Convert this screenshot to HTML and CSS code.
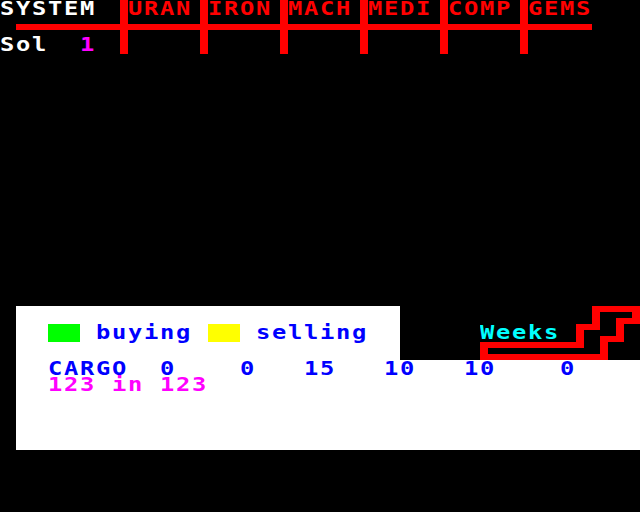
FILE: index.html
```html
<!DOCTYPE html>
<html>
<head>
<meta charset="utf-8">
<title>Trade</title>
<link rel="stylesheet" href="styles.css">
</head>
<body>
<div class="screen">
  <div class="table">
    <div class="sys"><span class="t white">SYSTEM</span></div>
    <div class="rule"></div>
    <div class="sol"><span class="t white">Sol</span><span class="t magenta">1</span></div>
    <div class="col c2"><span class="t red">URAN</span></div>
    <div class="col c3"><span class="t red">IRON</span></div>
    <div class="col c4"><span class="t red">MACH</span></div>
    <div class="col c5"><span class="t red">MEDI</span></div>
    <div class="col c6"><span class="t red">COMP</span></div>
    <div class="col c7"><span class="t red">GEMS</span></div>
  </div>

  <div class="panel">
    <div class="legend">
      <div class="swatch green"></div>
      <span class="t blue">buying</span>
      <div class="swatch yellow"></div>
      <span class="t blue">selling</span>
    </div>
    <div class="weeks">
      <div class="weeks-label"><span class="t cyan">Weeks</span></div>
      <svg class="stairs" width="240" height="54" viewBox="0 0 240 54">
        <g fill="#ff0000">
          <rect x="192" y="0" width="48" height="6"/>
          <rect x="232" y="0" width="8" height="12"/>
          <rect x="216" y="12" width="24" height="6"/>
          <rect x="216" y="12" width="8" height="24"/>
          <rect x="200" y="30" width="24" height="6"/>
          <rect x="200" y="30" width="8" height="24"/>
          <rect x="80" y="48" width="128" height="6"/>
          <rect x="192" y="0" width="8" height="24"/>
          <rect x="176" y="18" width="24" height="6"/>
          <rect x="176" y="18" width="8" height="24"/>
          <rect x="80" y="36" width="104" height="6"/>
          <rect x="80" y="36" width="8" height="18"/>
        </g>
      </svg>
    </div>
    <div class="cargo">
      <span class="t blue">CARGO</span>
      <span class="t blue">0</span>
      <span class="t blue">0</span>
      <span class="t blue">15</span>
      <span class="t blue">10</span>
      <span class="t blue">10</span>
      <span class="t blue">0</span>
      <div class="cap"><span class="t magenta">123 in 123</span></div>
    </div>
  </div>
</div>
</body>
</html>
```

FILE: styles.css
```css
html, body {
  margin: 0;
  padding: 0;
  background: #000;
}

.screen {
  width: 640px;
  height: 512px;
  overflow: hidden;
  background: #000;
}

.t {
  display: inline-block;
  font-family: "DejaVu Sans Mono", "Liberation Mono", monospace;
  font-weight: bold;
  font-size: 19px;
  line-height: 16px;
  letter-spacing: 1.36px;
  white-space: pre;
  transform: scaleX(1.25);
  transform-origin: 0 0;
}

.white { color: #ffffff; }
.red { color: #ff0000; }
.magenta { color: #ff00ff; }
.blue { color: #0000ff; }
.cyan { color: #00ffff; }

/* top table */
.table {
  display: grid;
  grid-template-columns: 120px repeat(6, 80px);
  grid-template-rows: 24px 6px 24px;
  width: 600px;
}

.sys {
  grid-column: 1;
  grid-row: 1;
}

.rule {
  grid-column: 1 / -1;
  grid-row: 2;
  margin: 0 8px 0 16px;
  background: #ff0000;
}

.sol {
  grid-column: 1;
  grid-row: 3;
  padding-top: 6px;
  display: grid;
  grid-template-columns: 80px auto;
  align-items: start;
}

.col {
  grid-row: 1 / 4;
  border-left: 8px solid #ff0000;
}
.c2 { grid-column: 2; }
.c3 { grid-column: 3; }
.c4 { grid-column: 4; }
.c5 { grid-column: 5; }
.c6 { grid-column: 6; }
.c7 { grid-column: 7; }

/* bottom panel */
.panel {
  margin-top: 252px;
  display: grid;
  grid-template-columns: 16px 384px 240px;
  grid-template-rows: 54px 90px;
}

.legend {
  grid-column: 2;
  grid-row: 1;
  background: #ffffff;
  padding: 18px 0 0 32px;
  display: grid;
  grid-template-columns: 32px 96px 32px 112px;
  column-gap: 16px;
  align-items: start;
}

.swatch {
  width: 32px;
  height: 18px;
}
.green { background: #00ff00; }
.yellow { background: #ffff00; }

.weeks {
  grid-column: 3;
  grid-row: 1;
  display: grid;
}
.weeks > * {
  grid-area: 1 / 1;
}
.weeks-label {
  padding: 18px 0 0 80px;
}
.stairs {
  display: block;
}

.cargo {
  grid-column: 2 / 4;
  grid-row: 2;
  background: #ffffff;
  padding-left: 32px;
  display: grid;
  grid-template-columns: 112px 80px 64px 80px 80px 96px auto;
  grid-template-rows: 16px 16px;
  align-content: start;
}

.cap {
  grid-column: 1 / -1;
  grid-row: 2;
}
```
